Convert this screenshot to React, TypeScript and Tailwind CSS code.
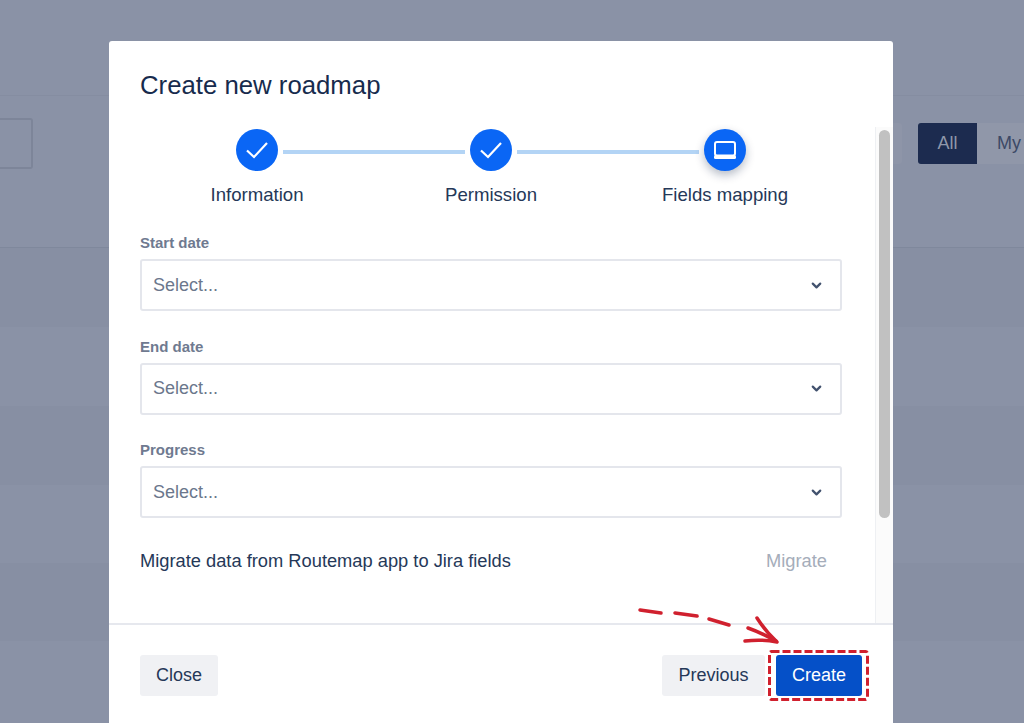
import { ChevronDown } from 'lucide-react';

const font = { fontFamily: '"Liberation Sans", Arial, sans-serif' };

function CheckStep({ label, active }: { label: string; active?: boolean }) {
    return (
        <div className="flex w-[140px] shrink-0 flex-col items-center">
            <div className={`flex h-[42px] w-[42px] items-center justify-center rounded-full bg-[#0a66f5] ${active ? 'shadow-[0_4px_10px_rgba(9,30,66,0.3)]' : ''}`}>
                {active ? (
                    <svg width="24" height="20" viewBox="0 0 24 20" fill="none">
                        <rect x="2" y="2" width="20" height="13.5" rx="2" stroke="#fff" strokeWidth="2" />
                        <rect x="1" y="15" width="22" height="4" rx="1.5" fill="#fff" />
                    </svg>
                ) : (
                    <svg width="24" height="20" viewBox="0 0 24 20" fill="none">
                        <path d="M2 10.5 L9 17 L22 3" stroke="#fff" strokeWidth="2.2" />
                    </svg>
                )}
            </div>
            <span className="mt-[12px] whitespace-nowrap text-[18.6px] leading-[24px] text-[#253858]">{label}</span>
        </div>
    );
}

function Connector() {
    return <div className="mx-[-44px] mt-[21px] h-[4px] w-[182px] shrink-0 bg-[#b3d4f5]" />;
}

function SelectField({ label }: { label: string }) {
    return (
        <div className="mb-[25.5px]">
            <div className="mb-[6px] text-[15px] font-bold leading-[20px] text-[#6f7a90]">{label}</div>
            <div className="flex h-[52px] w-[702px] items-center justify-between rounded-[3px] border-2 border-[#e4e6ec] pl-[11px] pr-[16px]">
                <span className="text-[18px] text-[#6b778c]">Select...</span>
                <ChevronDown size={15} strokeWidth={3.5} className="text-[#42526e]" />
            </div>
        </div>
    );
}

export default function App() {
    return (
        <div className="relative h-[723px] w-[1024px] overflow-hidden bg-[#8a92a6]" style={font}>
            {/* page behind the dialog */}
            <div className="h-[96px] border-b border-[#858da1]" />
            <div className="flex h-[152px] items-start justify-between border-b border-[#7f889c] pt-[22px]">
                <div className="h-[51px] w-[33px] rounded-r-[3px] border-2 border-l-0 border-[#7d8599]" />
                <div className="mt-[5px] flex">
                    <div className="h-[41px] w-[9px] rounded-r-[3px] bg-[#8e95a8]" />
                    <div className="ml-[16px] flex h-[41px] w-[106px]">
                        <div className="flex w-[59px] items-center justify-center rounded-l-[3px] bg-[#1c2b4f] text-[18px] text-[#8f97aa]">All</div>
                        <div className="flex w-[47px] items-center bg-[#9097a9] pl-[20px] text-[18px] text-[#3c4966]">My</div>
                    </div>
                </div>
            </div>
            <div className="h-[79px] bg-[#878fa3]" />
            <div className="h-[79px] bg-[#8a92a6]" />
            <div className="h-[79px] bg-[#878fa3]" />
            <div className="h-[78px] bg-[#8a92a6]" />
            <div className="h-[78px] bg-[#878fa3]" />

            {/* dialog */}
            <div className="absolute left-[109px] top-[41px] flex h-[700px] w-[784px] flex-col rounded-[3px] bg-white">
                <h1 className="pl-[31px] pt-[27px] text-[25.75px] font-normal leading-[34px] text-[#172b4d]">Create new roadmap</h1>
                <div className="mt-[25px] flex h-[498px] border-b-2 border-[#e6e8ee]">
                    <div className="w-[766px] pl-[31px]">
                        <div className="ml-[47px] mt-[2px] flex h-[104px] w-[608px] items-start">
                            <CheckStep label="Information" />
                            <Connector />
                            <CheckStep label="Permission" />
                            <Connector />
                            <CheckStep label="Fields mapping" active />
                        </div>
                        <SelectField label="Start date" />
                        <SelectField label="End date" />
                        <SelectField label="Progress" />
                        <div className="flex w-[702px] items-center justify-between pr-[15px] pt-[3px]">
                            <span className="text-[18.3px] text-[#253858]">Migrate data from Routemap app to Jira fields</span>
                            <span className="text-[18.3px] text-[#a5adba]">Migrate</span>
                        </div>
                    </div>
                    <div className="w-[18px] border-l border-[#eef0f3] bg-[#fbfbfb] pl-[3px] pt-[3px]">
                        <div className="h-[388px] w-[11px] rounded-full bg-[#c1c1c1]" />
                    </div>
                </div>
                <div className="flex items-start justify-between pl-[31px] pr-[31px] pt-[30px]">
                    <button className="h-[41px] w-[78px] rounded-[3px] bg-[#f0f1f4] text-[18px] text-[#253858]">Close</button>
                    <div className="flex gap-[11px]">
                        <button className="h-[41px] w-[103px] rounded-[3px] bg-[#f0f1f4] text-[18px] text-[#253858]">Previous</button>
                        <div className="relative">
                            <button className="h-[41px] w-[86px] rounded-[3px] bg-[#0550c8] text-[18px] text-white">Create</button>
                            <svg className="absolute left-[-8px] top-[-5px]" width="101" height="51" viewBox="0 0 101 51" fill="none">
                                <rect x="1.5" y="1.5" width="98" height="48" rx="2" stroke="#d0202e" strokeWidth="3" strokeDasharray="8 3" />
                            </svg>
                        </div>
                    </div>
                </div>
            </div>

            {/* hand drawn arrow */}
            <svg className="absolute left-[630px] top-[600px]" width="160" height="50" viewBox="0 0 160 50" fill="none">
                <path d="M10 10 L31 13" stroke="#d0202e" strokeWidth="3.5" strokeLinecap="round" />
                <path d="M45 13 L67 16" stroke="#d0202e" strokeWidth="3.5" strokeLinecap="round" />
                <path d="M79 19 L99 25" stroke="#d0202e" strokeWidth="3.5" strokeLinecap="round" />
                <path d="M118 28 Q132 33 146 41" stroke="#d0202e" strokeWidth="3.5" strokeLinecap="round" />
                <path d="M127 18 Q136 32 147 42 Q132 39 115 41" stroke="#d0202e" strokeWidth="3.5" strokeLinecap="round" strokeLinejoin="round" />
            </svg>
        </div>
    );
}
